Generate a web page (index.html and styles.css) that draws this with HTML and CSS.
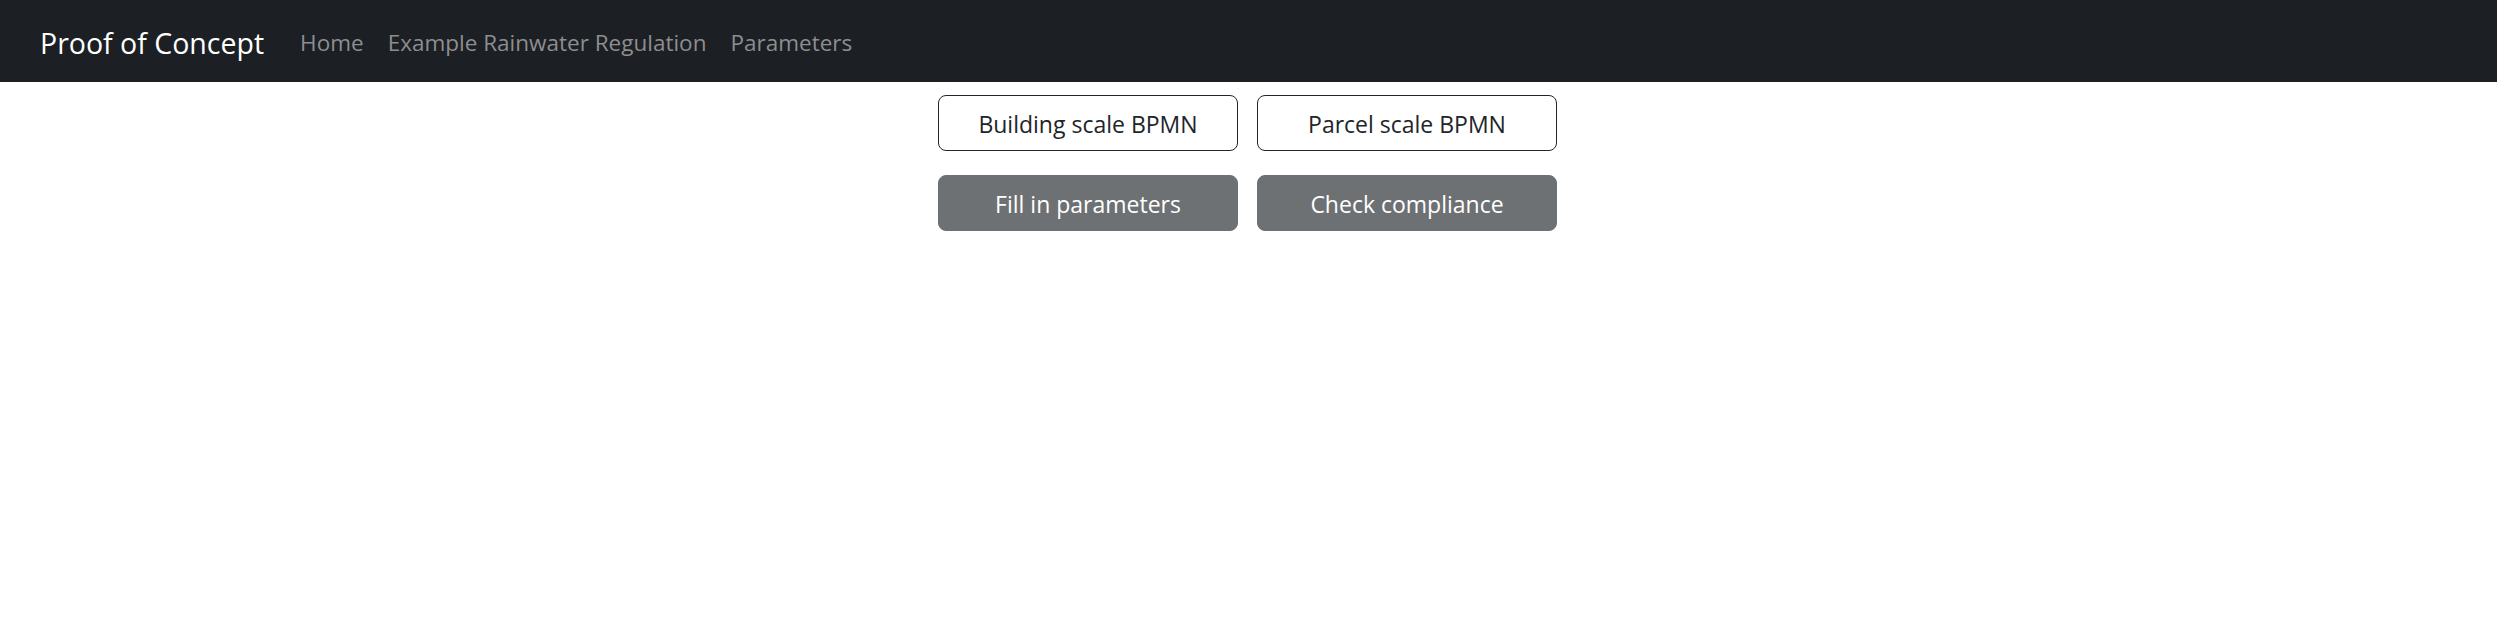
FILE: index.html
```html
<!DOCTYPE html>
<html lang="en">
<head>
<meta charset="utf-8">
<title>Proof of Concept</title>
<link rel="stylesheet" href="styles.css">
</head>
<body>
<nav class="navbar">
  <a class="brand" href="#">Proof of Concept</a>
  <ul class="nav">
    <li><a class="nav-link" href="#">Home</a></li>
    <li><a class="nav-link" href="#">Example Rainwater Regulation</a></li>
    <li><a class="nav-link" href="#">Parameters</a></li>
  </ul>
</nav>
<main class="main">
  <div class="btn-grid">
    <button class="btn btn-outline">Building scale BPMN</button>
    <button class="btn btn-outline">Parcel scale BPMN</button>
    <button class="btn btn-secondary">Fill in parameters</button>
    <button class="btn btn-secondary">Check compliance</button>
  </div>
</main>
</body>
</html>
```
FILE: styles.css
```css
* { box-sizing: border-box; }
html, body {
  margin: 0;
  padding: 0;
  background: #ffffff;
  font-family: "Open Sans", "Noto Sans", "Liberation Sans", sans-serif;
  color: #212529;
}
.navbar {
  display: flex;
  align-items: center;
  height: 82px;
  padding: 3px 37px 0 40px;
  background: #1c1f23;
}
.brand {
  color: #ffffff;
  text-decoration: none;
  font-size: 28.5px;
  line-height: 44px;
  margin-right: 24px;
}
.nav {
  display: flex;
  list-style: none;
  margin: 0;
  padding: 0;
}
.nav-link {
  display: block;
  padding: 10px 12px;
  color: #8c8e91;
  text-decoration: none;
  font-size: 22.5px;
  line-height: 36px;
}
.main {
  display: flex;
  justify-content: center;
  padding-top: 13px;
  padding-right: 2px;
}
.btn-grid {
  display: grid;
  grid-template-columns: 300px 300px;
  column-gap: 19px;
  row-gap: 24px;
}
.btn {
  height: 56px;
  font-family: inherit;
  font-size: 23px;
  line-height: 36px;
  padding: 10px 18px 8px;
  border-radius: 8px;
  border: 1.5px solid #212529;
  cursor: pointer;
}
.btn-outline {
  background: #ffffff;
  color: #212529;
}
.btn-secondary {
  background: #6d7174;
  border-color: #6d7174;
  color: #ffffff;
}
```
